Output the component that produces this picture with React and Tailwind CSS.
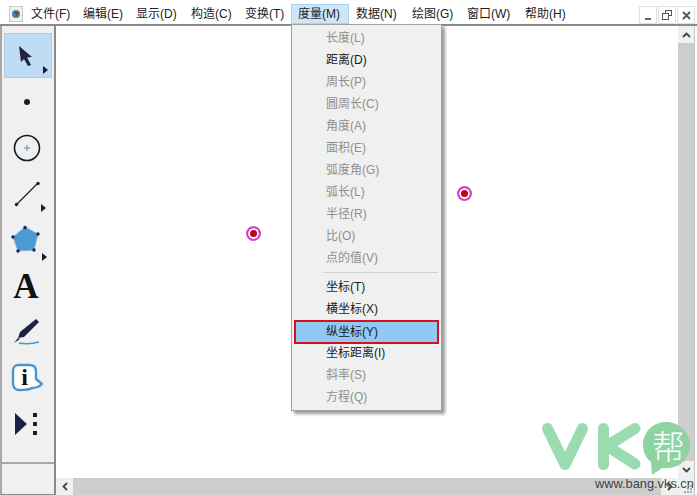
const fontStack = { fontFamily: '"Liberation Sans", "Noto Sans CJK SC", sans-serif' };

const menus = [
  { label: "文件(F)", w: "w-[52px]" },
  { label: "编辑(E)", w: "w-[53px]" },
  { label: "显示(D)", w: "w-[55px]" },
  { label: "构造(C)", w: "w-[54px]" },
  { label: "变换(T)", w: "w-[53px]" },
  { label: "度量(M)", w: "w-[58px]", open: true },
  { label: "数据(N)", w: "w-[56px]" },
  { label: "绘图(G)", w: "w-[55px]" },
  { label: "窗口(W)", w: "w-[58px]" },
  { label: "帮助(H)", w: "w-[56px]" },
];

const upperItems = [
  { label: "长度(L)" },
  { label: "距离(D)", on: true },
  { label: "周长(P)" },
  { label: "圆周长(C)" },
  { label: "角度(A)" },
  { label: "面积(E)" },
  { label: "弧度角(G)" },
  { label: "弧长(L)" },
  { label: "半径(R)" },
  { label: "比(O)" },
  { label: "点的值(V)" },
];

const lowerItems = [
  { label: "坐标(T)", on: true },
  { label: "横坐标(X)", on: true },
  { label: "纵坐标(Y)", on: true, selected: true },
  { label: "坐标距离(I)", on: true },
  { label: "斜率(S)" },
  { label: "方程(Q)" },
];

function MenuRow({ label, on, selected }) {
  if (selected) {
    return (
      <div className="relative z-10 mx-[2px] -mb-[2px] flex h-6 items-center border-2 border-[#d8101c] bg-[#90c8f6] pl-[30px] text-[12px] text-[#1a1a1a]">
        {label}
      </div>
    );
  }
  return (
    <div className={`flex h-[22px] items-center pl-[34px] text-[12px] ${on ? "text-[#1a1a1a]" : "text-[#8f8f8f]"}`}>
      {label}
    </div>
  );
}

function ToolSlot({ height, active, children }) {
  return (
    <div className={`relative flex shrink-0 items-center justify-center ${height} ${active ? "border border-[#a9cdea] bg-[#bfdcf5]" : ""}`}>
      {children}
    </div>
  );
}

function Flyout({ className }) {
  return <span className={`absolute size-0 border-y-[4px] border-l-[5px] border-y-transparent border-l-[#1b1b33] ${className}`} />;
}

function Point({ className }) {
  return <span className={`absolute size-[15px] rounded-full border-2 border-[#d23fe0] bg-[radial-gradient(circle,#c80018_35%,#6a0010_75%)] ring-2 ring-inset ring-white ${className}`} />;
}

export default function App() {
  return (
    <div className="flex h-[495px] w-[697px] flex-col overflow-hidden bg-white" style={fontStack}>
      <div className="flex h-[24px] shrink-0 items-end bg-white">
        <svg width="14" height="16" viewBox="0 0 14 16" className="mb-[2px] ml-[9px] mr-[1px]">
          <rect x="0.5" y="0.5" width="13" height="15" fill="#f1f1ea" stroke="#c9c9c0" />
          <circle cx="7" cy="8" r="4" fill="#3f83b8" />
          <path d="M5 6 L8 10 L10 6" fill="#6f4a20" />
        </svg>
        <div className="flex text-[12px] text-[#222]">
          {menus.map((m) => (
            <div key={m.label} className={`flex h-[20px] items-center pl-[6px] ${m.w} ${m.open ? "border border-[#a9d2f2] bg-[#cde6fa]" : "border border-transparent"}`}>
              {m.label}
            </div>
          ))}
        </div>
        <div className="ml-auto mr-[2px] flex gap-px text-[#555]">
          <div className="flex h-[18px] w-[18px] items-end justify-center border border-[#e0e0e0] pb-[3px]"><span className="h-[2px] w-[6px] bg-[#666]" /></div>
          <div className="flex h-[18px] w-[18px] items-center justify-center border border-[#e0e0e0]">
            <svg width="10" height="10" viewBox="0 0 10 10" fill="none" stroke="#555"><rect x="3.5" y="0.5" width="6" height="5" /><rect x="0.5" y="3.5" width="6" height="6" fill="#fff" /></svg>
          </div>
          <div className="flex h-[18px] w-[18px] items-center justify-center border border-[#e0e0e0]">
            <svg width="9" height="9" viewBox="0 0 9 9" stroke="#555" strokeWidth="1.8"><path d="M1 1 L8 8 M8 1 L1 8" /></svg>
          </div>
        </div>
      </div>

      <div className="flex min-h-0 flex-1 border-t-2 border-[#8a8a8a]">
        <aside className="flex w-[56px] shrink-0 flex-col border-x-2 border-b border-l-[#a8a8a8] border-r-[#8a8a8a] border-b-[#8a8a8a] bg-[#f0f0f0] pt-[7px]">
          <div className="flex flex-col pl-[2px] pr-[2px]">
            <ToolSlot height="h-[45px]" active>
              <svg width="18" height="22" viewBox="0 0 18 22" className="-translate-x-[2px]"><path d="M2 1 L15 12 L10 12.5 L14 20 L11 21 L7 14 L4 17 Z" fill="#1e2140" /></svg>
              <Flyout className="bottom-[3px] right-[3px]" />
            </ToolSlot>
            <ToolSlot height="h-[47px]">
              <span className="size-[6px] -translate-x-px rounded-full bg-[#1c1c2c]" />
            </ToolSlot>
            <ToolSlot height="h-[46px]">
              <svg width="28" height="28" viewBox="0 0 28 28" className="-translate-x-[1px]"><circle cx="14" cy="14" r="12.5" fill="none" stroke="#1a1a1a" strokeWidth="1.6" /><path d="M14 11 V17 M11 14 H17" stroke="#4f94c8" strokeWidth="1" /></svg>
            </ToolSlot>
            <ToolSlot height="h-[46px]">
              <svg width="26" height="26" viewBox="0 0 26 26" className="-translate-x-[1px]"><path d="M2 24 L24 2" stroke="#222" strokeWidth="1.3" /><circle cx="2.5" cy="23.5" r="1.7" fill="#1c1c3c" /><circle cx="24" cy="2.5" r="1.7" fill="#1c1c3c" /></svg>
              <Flyout className="bottom-[5px] right-[6px]" />
            </ToolSlot>
            <ToolSlot height="h-[46px]">
              <svg width="32" height="30" viewBox="0 0 32 30" className="-translate-x-[2px]"><path d="M15 2 L28 9 L24 25 L8 26 L3 12 Z" fill="#4b9ad2" stroke="#7db8e0" /><g fill="#1c2450"><circle cx="15" cy="2.5" r="1.7" /><circle cx="28" cy="9" r="1.7" /><circle cx="24" cy="25" r="1.7" /><circle cx="8" cy="26" r="1.7" /><circle cx="3" cy="12" r="1.7" /></g></svg>
              <Flyout className="bottom-[2px] right-[5px]" />
            </ToolSlot>
            <ToolSlot height="h-[46px]">
              <span className="-translate-x-[2px] text-[35px] font-bold leading-none text-[#111]" style={{ fontFamily: '"Liberation Serif", serif' }}>A</span>
            </ToolSlot>
            <ToolSlot height="h-[46px]">
              <svg width="28" height="28" viewBox="0 0 28 28" className="-translate-x-[2px]"><path d="M24 1 L27 4 L12 19 L6 20 L8 14 Z" fill="#1e2146" /><path d="M6 20 L2 25 L8 21 Z" fill="#1e2146" /><path d="M7 25 C12 26 20 26 27 24" stroke="#4f94c8" strokeWidth="1.4" fill="none" /></svg>
            </ToolSlot>
            <ToolSlot height="h-[46px]">
              <svg width="32" height="30" viewBox="0 0 32 30" className="-translate-x-[1px]"><path d="M8 2 H18 C22 2 25 4 25 8 V16 L31 21 C28 24 25 25 21 25 C18 27 12 27 8 27 C4 27 2 24 2 20 V8 C2 4 4 2 8 2 Z" fill="#fff" stroke="#4f94c8" strokeWidth="2.4" strokeLinejoin="round" /><text x="13.5" y="22" textAnchor="middle" fontSize="24" fontWeight="700" fill="#111" style={{ fontFamily: '"Liberation Serif", serif' }}>i</text></svg>
            </ToolSlot>
            <ToolSlot height="h-[46px]">
              <svg width="24" height="24" viewBox="0 0 24 24" className="-translate-x-[2px]"><path d="M1 1 L13 12 L1 23 Z" fill="#1e2146" /><g fill="#1c1c2c"><rect x="19" y="1" width="4" height="4" /><rect x="19" y="10" width="4" height="4" /><rect x="19" y="19" width="4" height="4" /></g></svg>
            </ToolSlot>
          </div>
          <div className="mt-auto h-[32px] border-t-2 border-[#a8a8a8]" />
        </aside>

        <div className="mr-[2px] flex min-w-0 flex-1 flex-col border-r border-[#c4c4c4]">
          <div className="flex min-h-0 flex-1">
            <main className="relative flex-1 bg-white">
              <Point className="left-[190px] top-[200px]" />
              <Point className="left-[401px] top-[160px]" />
              <div className="absolute left-[235px] -top-[2px] z-10 w-[151px] border border-[#a0a0a0] bg-[#f0f0f0] py-[2px] shadow-[3px_3px_3px_rgba(0,0,0,0.4)]">
                {upperItems.map((item) => <MenuRow key={item.label} {...item} />)}
                <div className="my-[3px] ml-[31px] mr-[3px] h-px bg-[#d0d0d0]" />
                {lowerItems.map((item) => <MenuRow key={item.label} {...item} />)}
              </div>
            </main>
            <div className="flex w-[16px] shrink-0 flex-col bg-[#f0f0f0]">
              <div className="flex h-[17px] items-center justify-center">
                <svg width="9" height="6" viewBox="0 0 9 6" fill="none" stroke="#444" strokeWidth="1.8"><path d="M1 5 L4.5 1.5 L8 5" /></svg>
              </div>
              <div className="flex-1 bg-[#cdcdcd]" />
              <div className="flex h-[17px] items-center justify-center">
                <svg width="9" height="6" viewBox="0 0 9 6" fill="none" stroke="#444" strokeWidth="1.8"><path d="M1 1 L4.5 4.5 L8 1" /></svg>
              </div>
            </div>
          </div>
          <div className="flex h-[17px] shrink-0 bg-[#f0f0f0]">
            <div className="flex w-[17px] items-center justify-center">
              <svg width="6" height="9" viewBox="0 0 6 9" fill="none" stroke="#444" strokeWidth="1.8"><path d="M5 1 L1.5 4.5 L5 8" /></svg>
            </div>
            <div className="flex-1 bg-[#cdcdcd]" />
            <div className="flex w-[17px] items-center justify-center">
              <svg width="6" height="9" viewBox="0 0 6 9" fill="none" stroke="#444" strokeWidth="1.8"><path d="M1 1 L4.5 4.5 L1 8" /></svg>
            </div>
            <div className="flex w-[16px] items-end justify-end p-[2px]">
              <svg width="8" height="8" viewBox="0 0 8 8" fill="#a8a8a8"><rect x="6" y="0" width="2" height="2" /><rect x="3" y="3" width="2" height="2" /><rect x="6" y="3" width="2" height="2" /><rect x="0" y="6" width="2" height="2" /><rect x="3" y="6" width="2" height="2" /><rect x="6" y="6" width="2" height="2" /></svg>
            </div>
          </div>
        </div>
      </div>

      {/* watermark */}
      <div className="pointer-events-none absolute left-[541px] top-[420px]">
        <svg width="152" height="60" viewBox="0 0 152 60">
          <path d="M6.5 8.5 L24 44.5 L41.5 8.5 M62.5 8.5 V44.5 M94 8.5 L66 26 L94 44" fill="none" stroke="#9adcb0" strokeWidth="11" strokeLinecap="round" strokeLinejoin="round" />
          <path d="M125 2 C112 2 102 12 102 25 C102 32 105 38 110 42 L111 55 L121 48 C138 50 149 39 149 25 C149 12 138 2 125 2 Z" fill="#8fd3a4" />
        </svg>
        <span className="absolute left-[111px] top-[9px] text-[33px] font-light leading-none text-white" style={{ fontFamily: '"Noto Sans CJK SC", sans-serif' }}>帮</span>
      </div>
      <span className="pointer-events-none absolute left-[595px] top-[476px] text-[12.8px] leading-[16px] text-[#444]">www.bang.vks.cn</span>
    </div>
  );
}
